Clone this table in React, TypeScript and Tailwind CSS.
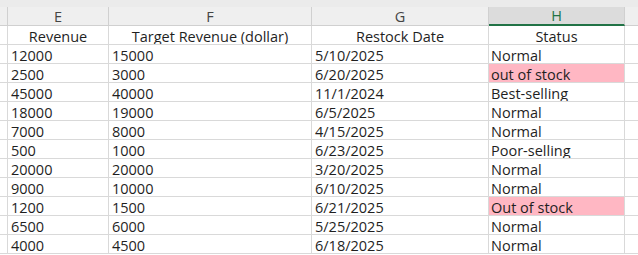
import React from "react";

const rows: [string, string, string, string, boolean][] = [
  ["12000", "15000", "5/10/2025", "Normal", false],
  ["2500", "3000", "6/20/2025", "out of stock", true],
  ["45000", "40000", "11/1/2024", "Best-selling", false],
  ["18000", "19000", "6/5/2025", "Normal", false],
  ["7000", "8000", "4/15/2025", "Normal", false],
  ["500", "1000", "6/23/2025", "Poor-selling", false],
  ["20000", "20000", "3/20/2025", "Normal", false],
  ["9000", "10000", "6/10/2025", "Normal", false],
  ["1200", "1500", "6/21/2025", "Out of stock", true],
  ["6500", "6000", "5/25/2025", "Normal", false],
  ["4000", "4500", "6/18/2025", "Normal", false],
];

const cols = "grid grid-cols-[8px_101px_203px_177px_136px_1fr]";
const cell = "h-[19px] border-r border-b border-[#d9d9d9] text-[14.5px] leading-[22px] text-[#1f1f1f] whitespace-nowrap overflow-hidden";

export default function App() {
  return (
    <div className="w-[638px] h-[255px] bg-white overflow-hidden" style={{ fontFamily: '"Open Sans", "Noto Sans CJK SC", sans-serif' }}>
      <div className="h-[7px] bg-[#ebebeb]" />
      <div className={cols}>
        <div className="h-[19px] bg-[#efefef] border-r border-b border-[#d0d0d0]" />
        <div className="h-[19px] bg-[#efefef] border-r border-b border-[#d0d0d0] text-center text-[14.5px] leading-[19px] text-[#444]">E</div>
        <div className="h-[19px] bg-[#efefef] border-r border-b border-[#d0d0d0] text-center text-[14.5px] leading-[19px] text-[#444]">F</div>
        <div className="h-[19px] bg-[#efefef] border-r border-b border-[#d0d0d0] text-center text-[14.5px] leading-[19px] text-[#444]">G</div>
        <div className="h-[19px] bg-[#dcdcdc] border-r border-[#d0d0d0] border-b-2 border-b-[#217346] text-center text-[14.5px] leading-[18px] text-[#217346]">H</div>
        <div className="h-[19px] bg-[#efefef] border-b border-[#d0d0d0]" />

        <div className={cell} />
        <div className={`${cell} text-center`}>Revenue</div>
        <div className={`${cell} text-center`}>Target Revenue (dollar)</div>
        <div className={`${cell} text-center`}>Restock Date</div>
        <div className={`${cell} text-center`}>Status</div>
        <div className={`${cell} border-r-0`} />

        {rows.map((r, i) => (
          <React.Fragment key={i}>
            <div className={cell} />
            <div className={`${cell} pl-[3px]`}>{r[0]}</div>
            <div className={`${cell} pl-[3px]`}>{r[1]}</div>
            <div className={`${cell} pl-[3px]`}>{r[2]}</div>
            <div className={`${cell} pl-[2px] ${r[4] ? "bg-[#ffb7c3]" : ""}`}>{r[3]}</div>
            <div className={`${cell} border-r-0`} />
          </React.Fragment>
        ))}
      </div>
    </div>
  );
}
